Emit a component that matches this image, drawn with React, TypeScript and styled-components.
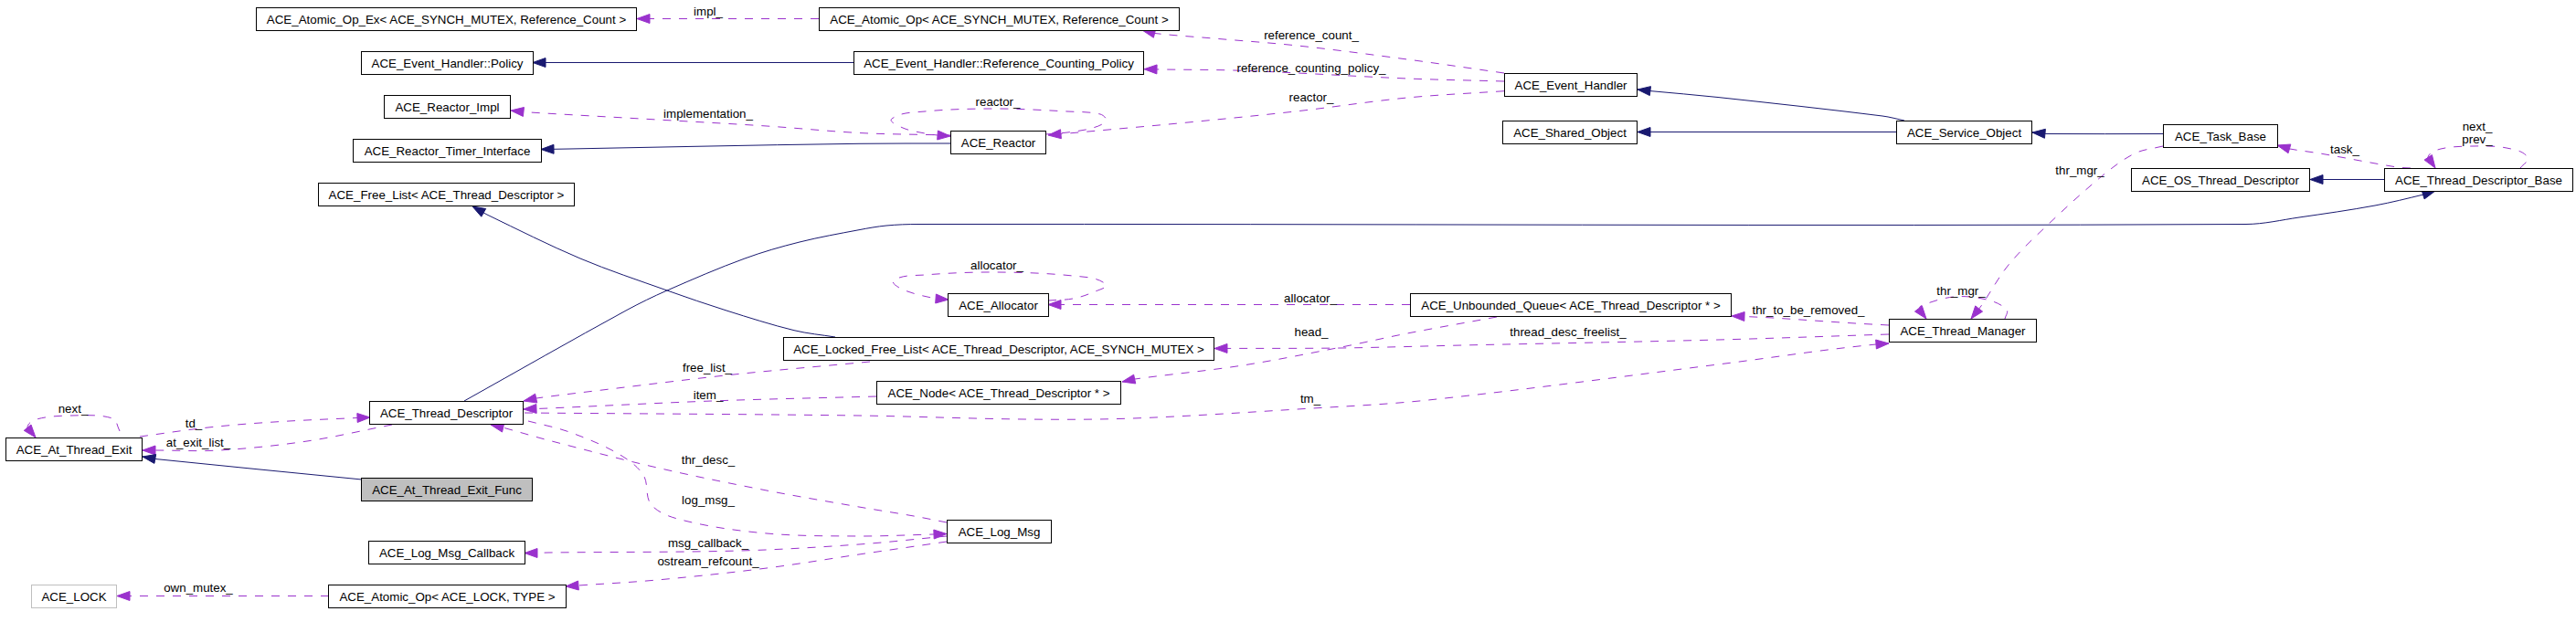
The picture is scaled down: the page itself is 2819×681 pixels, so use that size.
import { FC } from "react";
import styled, { createGlobalStyle } from "styled-components";

type Point = [number, number];

interface NodeInfo {
  name: string;
  x: number;
  y: number;
  w: number;
  kind?: "normal" | "current" | "muted";
}

interface EdgeInfo {
  points: Point[];
  inherit?: boolean;
}

interface LabelInfo {
  text: string;
  x: number;
  y: number;
}

const NAVY = "#191970";
const PURPLE = "#9a32cd";
const ARROW_LENGTH = 14;
const ARROW_WIDTH = 10;

const nodes: NodeInfo[] = [
  { name: "ACE_Atomic_Op_Ex< ACE_SYNCH_MUTEX, Reference_Count >", x: 280, y: 8, w: 417 },
  { name: "ACE_Atomic_Op< ACE_SYNCH_MUTEX, Reference_Count >", x: 896, y: 8, w: 395 },
  { name: "ACE_Event_Handler::Policy", x: 395, y: 56, w: 189 },
  { name: "ACE_Event_Handler::Reference_Counting_Policy", x: 934, y: 56, w: 318 },
  { name: "ACE_Event_Handler", x: 1646, y: 80, w: 146 },
  { name: "ACE_Reactor_Impl", x: 420, y: 104, w: 139 },
  { name: "ACE_Shared_Object", x: 1644, y: 132, w: 148 },
  { name: "ACE_Service_Object", x: 2075, y: 132, w: 149 },
  { name: "ACE_Task_Base", x: 2367, y: 136, w: 126 },
  { name: "ACE_Reactor", x: 1040, y: 143, w: 105 },
  { name: "ACE_Reactor_Timer_Interface", x: 386, y: 152, w: 207 },
  { name: "ACE_OS_Thread_Descriptor", x: 2332, y: 184, w: 196 },
  { name: "ACE_Thread_Descriptor_Base", x: 2609, y: 184, w: 207 },
  { name: "ACE_Free_List< ACE_Thread_Descriptor >", x: 348, y: 200, w: 281 },
  { name: "ACE_Allocator", x: 1037, y: 321, w: 111 },
  { name: "ACE_Unbounded_Queue< ACE_Thread_Descriptor * >", x: 1543, y: 321, w: 352 },
  { name: "ACE_Thread_Manager", x: 2067, y: 349, w: 162 },
  { name: "ACE_Locked_Free_List< ACE_Thread_Descriptor, ACE_SYNCH_MUTEX >", x: 857, y: 369, w: 472 },
  { name: "ACE_Node< ACE_Thread_Descriptor * >", x: 959, y: 417, w: 268 },
  { name: "ACE_Thread_Descriptor", x: 404, y: 439, w: 169 },
  { name: "ACE_At_Thread_Exit", x: 6, y: 479, w: 150 },
  { name: "ACE_At_Thread_Exit_Func", x: 395, y: 523, w: 188, kind: "current" },
  { name: "ACE_Log_Msg", x: 1036, y: 569, w: 115 },
  { name: "ACE_Log_Msg_Callback", x: 403, y: 592, w: 172 },
  { name: "ACE_LOCK", x: 34, y: 640, w: 94, kind: "muted" },
  { name: "ACE_Atomic_Op< ACE_LOCK, TYPE >", x: 359, y: 640, w: 261 },
];

const edges: EdgeInfo[] = [
  { points: [[896, 20.5], [697, 20.5]] },
  { points: [[1040, 148], [1024, 147.7], [940, 145.5], [839, 138], [719, 131], [575, 122.7], [559, 121]] },
  { points: [[1646, 80], [1540, 65], [1420, 50], [1324, 41.7], [1264, 36.5], [1250, 33]] },
  { points: [[1646, 89], [1540, 86], [1360, 77.3], [1270, 76], [1252, 75.7]] },
  { points: [[1646, 99.7], [1540, 107], [1420, 121.7], [1300, 134], [1180, 145], [1147, 148]] },
  { points: [[1144, 147], [1168, 145], [1196, 140], [1210, 132], [1204, 125], [1168, 122], [1090, 119], [1012, 122], [976, 130], [988, 140], [1012, 146], [1026, 148], [1040, 149]] },
  { points: [[2367, 160], [2336, 168], [2300, 193], [2240, 247], [2198, 290], [2168, 335], [2157, 349]] },
  { points: [[2194, 349], [2196, 339], [2174, 328], [2138, 325], [2102, 335], [2101, 340], [2108, 349]] },
  { points: [[2758, 184], [2766, 172], [2743, 162], [2707, 160], [2671, 163], [2657, 172], [2665, 184]] },
  { points: [[2638, 184], [2623, 183], [2539, 168], [2506, 163], [2492, 159]] },
  { points: [[1147, 329], [1174, 327], [1196, 320], [1210, 311], [1174, 302], [1090, 298], [1012, 301], [978, 307], [988, 317], [1024, 327], [1038, 328]] },
  { points: [[1543, 333.5], [1147, 333.5]] },
  { points: [[1638, 347], [1540, 365], [1468, 380], [1360, 400], [1242, 415], [1228, 418]] },
  { points: [[2067, 366], [1880, 372], [1600, 378], [1468, 381], [1329, 381.5]] },
  { points: [[2067, 356], [2030, 354], [1940, 348], [1909, 346.5], [1895, 346]] },
  { points: [[574, 452], [940, 455], [1120, 459], [1240, 458], [1420, 448], [1563, 438], [1888, 398], [2000, 383], [2053, 377], [2067, 376]] },
  { points: [[952, 396], [803, 410], [659, 427], [587, 436], [573, 439]] },
  { points: [[959, 434], [779, 439], [600, 447], [587, 447.5], [573, 448]] },
  { points: [[1036, 572], [1000, 565], [940, 555], [839, 537], [719, 512], [600, 482], [550, 468], [537, 465]] },
  { points: [[578, 461], [623, 473], [677, 497], [704, 520], [713, 553], [749, 570], [839, 584], [940, 587], [1022, 585], [1036, 584.5]] },
  { points: [[1036, 587], [940, 596], [809, 603], [600, 605], [588, 605.5], [574, 605.5]] },
  { points: [[1036, 593], [940, 607], [839, 622], [719, 635], [633, 641], [619, 642]] },
  { points: [[360, 652.5], [128, 652.5]] },
  { points: [[131, 472], [123, 458], [78, 455], [40, 459], [30, 468], [39, 479]] },
  { points: [[153, 478], [228, 468], [300, 462], [391, 457.5], [405, 457]] },
  { points: [[429, 465], [336, 483], [240, 493], [170, 493], [156, 493]] },
  { points: [[935, 68.5], [583, 68.5]], inherit: true },
  { points: [[1040, 157], [940, 157.3], [761, 160.3], [623, 163], [606, 163.3], [592, 163.5]], inherit: true },
  { points: [[2084, 132], [2060, 127], [1880, 106.5], [1805, 99.5], [1792, 98]], inherit: true },
  { points: [[2075, 144.5], [1792, 144.5]], inherit: true },
  { points: [[2367, 146.5], [2240, 146.5], [2224, 145]], inherit: true },
  { points: [[2609, 196.5], [2528, 196.5]], inherit: true },
  { points: [[508, 439], [685, 340], [730, 318], [815, 283], [875, 265], [940, 251.7], [970, 247], [1005, 245.5], [2458, 245.5], [2516, 238], [2599, 225], [2652, 213], [2665, 209]], inherit: true },
  { points: [[914, 369], [869, 361.7], [795, 340], [730, 318], [635, 283], [533, 235], [517, 226]], inherit: true },
  { points: [[396, 525], [170, 502.5], [156, 500]], inherit: true },
];

const labels: LabelInfo[] = [
  { text: "impl_", x: 775, y: 13 },
  { text: "implementation_", x: 775, y: 125 },
  { text: "reference_count_", x: 1435, y: 39 },
  { text: "reference_counting_policy_", x: 1435, y: 75 },
  { text: "reactor_", x: 1435, y: 107 },
  { text: "reactor_", x: 1092, y: 112 },
  { text: "thr_mgr_", x: 2276, y: 187 },
  { text: "thr_mgr_", x: 2146, y: 319 },
  { text: "next_", x: 2711, y: 139 },
  { text: "prev_", x: 2711, y: 153 },
  { text: "task_", x: 2566, y: 164 },
  { text: "allocator_", x: 1091, y: 291 },
  { text: "allocator_", x: 1434, y: 327 },
  { text: "head_", x: 1435, y: 364 },
  { text: "thread_desc_freelist_", x: 1716, y: 364 },
  { text: "thr_to_be_removed_", x: 1979, y: 340 },
  { text: "tm_", x: 1434, y: 437 },
  { text: "free_list_", x: 774, y: 403 },
  { text: "item_", x: 775, y: 433 },
  { text: "thr_desc_", x: 775, y: 504 },
  { text: "log_msg_", x: 775, y: 548 },
  { text: "msg_callback_", x: 775, y: 595 },
  { text: "ostream_refcount_", x: 775, y: 615 },
  { text: "own_mutex_", x: 217, y: 644 },
  { text: "next_", x: 80, y: 448 },
  { text: "td_", x: 212, y: 464 },
  { text: "at_exit_list_", x: 217, y: 485 },
];

// tangent through the neighbours, scaled to the segment so a short bend
// next to a long straight run does not overshoot
const control = (from: Point, to: Point, before: Point, after: Point, sign: number): Point => {
  const tx = after[0] - before[0];
  const ty = after[1] - before[1];
  const tl = Math.hypot(tx, ty) || 1;
  const reach = Math.hypot(to[0] - from[0], to[1] - from[1]) / 3;
  return [from[0] + (sign * tx * reach) / tl, from[1] + (sign * ty * reach) / tl];
};

const toPath = (points: Point[]) => {
  let d = `M${points[0][0]},${points[0][1]}`;
  for (let i = 0; i < points.length - 1; i++) {
    const p0 = points[Math.max(i - 1, 0)];
    const p1 = points[i];
    const p2 = points[i + 1];
    const p3 = points[Math.min(i + 2, points.length - 1)];
    const c1 = control(p1, p2, p0, p2, 1);
    const c2 = control(p2, p1, p1, p3, -1);
    d += ` C${c1[0].toFixed(1)},${c1[1].toFixed(1)} ${c2[0].toFixed(1)},${c2[1].toFixed(1)} ${p2[0]},${p2[1]}`;
  }
  return d;
};

const arrowHead = (points: Point[]) => {
  const tip = points[points.length - 1];
  const prev = points[points.length - 2];
  const dx = tip[0] - prev[0];
  const dy = tip[1] - prev[1];
  const len = Math.hypot(dx, dy) || 1;
  const ux = dx / len;
  const uy = dy / len;
  const bx = tip[0] - ux * ARROW_LENGTH;
  const by = tip[1] - uy * ARROW_LENGTH;
  const half = ARROW_WIDTH / 2;
  return `${tip[0]},${tip[1]} ${bx - uy * half},${by + ux * half} ${bx + uy * half},${by - ux * half}`;
};

const GlobalStyle = createGlobalStyle`
  html, body {
    margin: 0;
    padding: 0;
    background: #fff;
  }
`;

const Diagram = styled.div`
  position: relative;
  width: 2819px;
  height: 681px;
  overflow: hidden;
  background: #fff;
  font-family: "Liberation Sans", Arial, sans-serif;
  font-size: 13.33px;
  color: #000;
`;

const EdgeLayer = styled.svg`
  position: absolute;
  left: 0;
  top: 0;
`;

const NodeBox = styled.div<{ $x: number; $y: number; $w: number; $kind: string }>`
  position: absolute;
  left: ${({ $x }) => $x}px;
  top: ${({ $y }) => $y}px;
  width: ${({ $w }) => $w}px;
  height: 26px;
  box-sizing: border-box;
  display: flex;
  align-items: center;
  justify-content: center;
  white-space: pre;
  border: 1px solid ${({ $kind }) => ($kind === "muted" ? "#bfbfbf" : "#000")};
  background: ${({ $kind }) => ($kind === "current" ? "#bfbfbf" : "#fff")};
`;

const EdgeLabel = styled.span<{ $x: number; $y: number }>`
  position: absolute;
  left: ${({ $x }) => $x}px;
  top: ${({ $y }) => $y}px;
  transform: translate(-50%, -50%);
  white-space: pre;
  line-height: 14px;
`;

const App: FC = () => {
  return (
    <Diagram>
      <GlobalStyle />
      <EdgeLayer width={2819} height={681} viewBox="0 0 2819 681">
        {edges.map((edge, i) => {
          const color = edge.inherit ? NAVY : PURPLE;
          return (
            <g key={i}>
              <path
                d={toPath(edge.points)}
                fill="none"
                stroke={color}
                strokeWidth={1}
                strokeDasharray={edge.inherit ? undefined : "9 9"}
              />
              <polygon points={arrowHead(edge.points)} fill={color} stroke={color} />
            </g>
          );
        })}
      </EdgeLayer>
      {labels.map((label, i) => (
        <EdgeLabel key={i} $x={label.x} $y={label.y}>
          {label.text}
        </EdgeLabel>
      ))}
      {nodes.map((node) => (
        <NodeBox key={node.name} $x={node.x} $y={node.y} $w={node.w} $kind={node.kind ?? "normal"}>
          {node.name}
        </NodeBox>
      ))}
    </Diagram>
  );
};

export default App;
